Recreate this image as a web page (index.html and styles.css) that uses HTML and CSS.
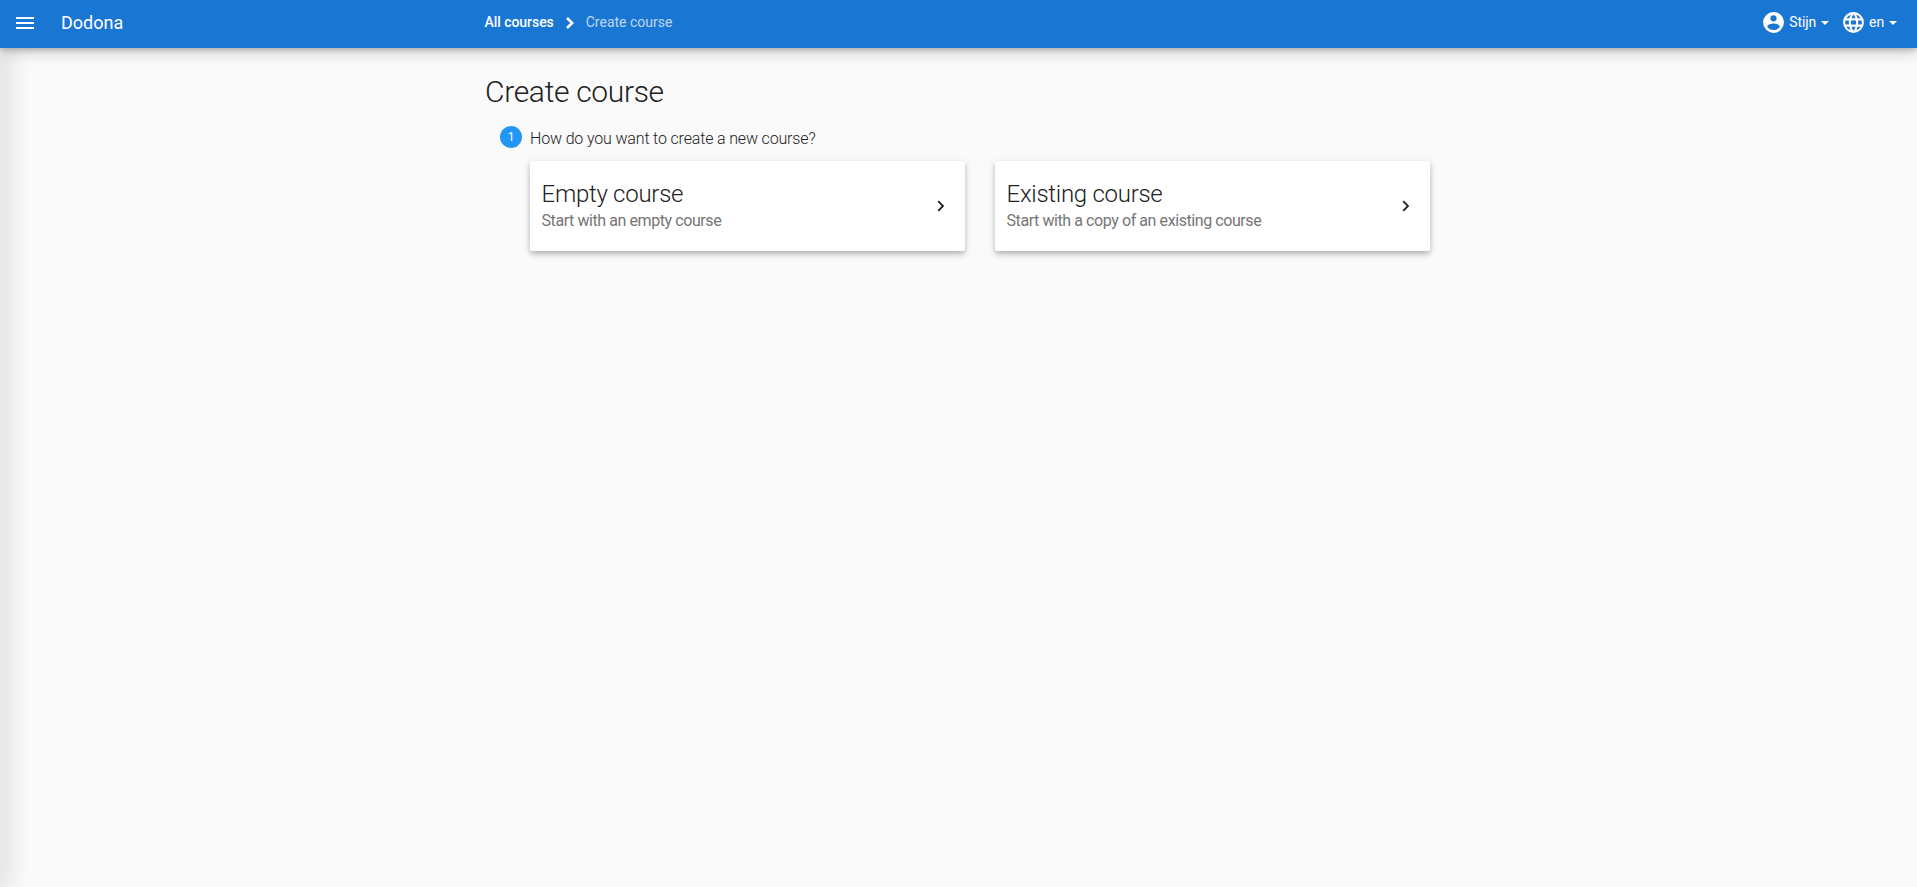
FILE: index.html
```html
<!DOCTYPE html>
<html lang="en">
<head>
<meta charset="utf-8">
<title>Create course - Dodona</title>
<link rel="stylesheet" href="styles.css">
</head>
<body>
<header class="navbar">
  <svg class="menu" viewBox="0 0 24 24"><path d="M3 6h18v2H3V6m0 5h18v2H3v-2m0 5h18v2H3v-2z"/></svg>
  <a class="brand">Dodona</a>
  <nav class="crumbs">
    <a class="crumb">All courses</a>
    <svg class="crumb-sep" viewBox="0 0 8 12"><path d="M1 1 6.200 6 1 11"/></svg>
    <span class="current">Create course</span>
  </nav>
  <div class="actions">
    <a class="action"><svg class="icon" viewBox="0 0 24 24"><path d="M12 19.200c-2.500 0-4.710-1.280-6-3.200.030-2 4-3.100 6-3.100s5.970 1.100 6 3.100a7.232 7.232 0 0 1-6 3.200M12 5a3 3 0 0 1 3 3 3 3 0 0 1-3 3 3 3 0 0 1-3-3 3 3 0 0 1 3-3m0-3A10 10 0 0 0 2 12a10 10 0 0 0 10 10 10 10 0 0 0 10-10c0-5.530-4.500-10-10-10z"/></svg><span>Stijn</span><i class="caret"></i></a>
    <a class="action"><svg class="icon" viewBox="0 0 24 24"><path d="M16.360 14c.080-.660.140-1.320.140-2 0-.680-.060-1.340-.140-2h3.380c.160.640.260 1.310.260 2s-.100 1.360-.260 2m-5.150 5.560c.600-1.110 1.060-2.310 1.380-3.560h2.950a8.030 8.030 0 0 1-4.330 3.560M14.340 14H9.660c-.100-.660-.160-1.320-.160-2 0-.680.060-1.350.160-2h4.680c.090.650.160 1.320.160 2 0 .680-.070 1.340-.160 2M12 19.960c-.830-1.200-1.500-2.530-1.910-3.960h3.820c-.410 1.430-1.080 2.760-1.910 3.960M8 8H5.080A7.923 7.923 0 0 1 9.400 4.440C8.800 5.550 8.350 6.750 8 8m-2.920 8H8c.350 1.250.800 2.450 1.400 3.560A8.008 8.008 0 0 1 5.080 16m-.820-2C4.100 13.360 4 12.690 4 12s.100-1.360.260-2h3.380c-.080.660-.140 1.320-.140 2 0 .680.060 1.340.140 2M12 4.030c.830 1.200 1.500 2.540 1.910 3.970h-3.820c.410-1.430 1.080-2.770 1.910-3.970M18.920 8h-2.950a15.650 15.650 0 0 0-1.380-3.560c1.840.630 3.370 1.900 4.330 3.560M12 2C6.470 2 2 6.500 2 12a10 10 0 0 0 10 10 10 10 0 0 0 10-10A10 10 0 0 0 12 2z"/></svg><span>en</span><i class="caret"></i></a>
  </div>
</header>
<div class="page">
  <aside class="drawer-edge"></aside>
  <main class="content">
    <h1 class="title">Create course</h1>
    <section class="step">
      <div class="step-head"><span class="number">1</span><span class="question">How do you want to create a new course?</span></div>
      <div class="cards">
        <a class="card">
          <div><h2 class="card-title">Empty course</h2><p class="card-text">Start with an empty course</p></div>
          <svg class="chevron" viewBox="0 0 8 12"><path d="M1.200 1.200 6 6l-4.800 4.800"/></svg>
        </a>
        <a class="card">
          <div><h2 class="card-title">Existing course</h2><p class="card-text">Start with a copy of an existing course</p></div>
          <svg class="chevron" viewBox="0 0 8 12"><path d="M1.200 1.200 6 6l-4.800 4.800"/></svg>
        </a>
      </div>
    </section>
  </main>
</div>
</body>
</html>
```
FILE: styles.css
```css
* { box-sizing: border-box; }
body {
  margin: 0;
  height: 100vh;
  display: flex;
  flex-direction: column;
  overflow: hidden;
  background: #fafafa;
  color: #212121;
  font-family: Roboto, "Liberation Sans", sans-serif;
}
h1, h2, p { margin: 0; font-weight: 300; }
.navbar {
  flex: none;
  z-index: 2;
  height: 48px;
  display: flex;
  align-items: center;
  padding: 0 20px 0 13px;
  background: #1976d2;
  color: #fff;
  fill: #fff;
  box-shadow: 0 2px 5px rgba(0,0,0,.18), 0 3px 16px rgba(0,0,0,.22);
}
.menu { width: 24px; height: 24px; margin-top: -2px; }
.brand { width: 423px; margin-left: 24px; padding-bottom: 3px; font-size: 18px; line-height: 24px; }
.crumbs { display: flex; align-items: center; padding-bottom: 4px; font-size: 14px; line-height: 20px; }
.crumb { margin-left: .5px; font-weight: 500; letter-spacing: -.05px; }
.crumb-sep { width: 8px; height: 12px; margin: 2px 12px 0; fill: none; stroke: #fff; stroke-width: 2.600; }
.current { font-weight: 400; opacity: .7; }
.actions { display: flex; gap: 12px; margin-left: auto; padding-bottom: 3px; font-size: 14px; line-height: 20px; }
.action { display: flex; align-items: center; }
.action span { padding-bottom: 1px; letter-spacing: -.12px; }
.icon { width: 25px; height: 25px; margin: 0 3px 0 0; }
.caret { margin: 1px 0 0 5px; border: 4px solid transparent; border-top-color: #fff; border-bottom: 0; }
.page { display: flex; flex: 1; }
.drawer-edge { width: 0; box-shadow: 0 0 24px 5px rgba(0,0,0,.22); }
.content { width: 945px; margin-left: 485px; padding-top: 24px; }
.title { font-size: 30px; line-height: 40px; letter-spacing: -.32px; }
.step { padding: 13px 0 0 15px; }
.step-head { display: flex; align-items: center; height: 24px; }
.number {
  width: 22px;
  height: 22px;
  margin-right: 8px;
  border-radius: 50%;
  background: #2196f3;
  color: #fff;
  font-size: 12px;
  line-height: 22px;
  text-align: center;
}
.question { padding-top: 3px; font-size: 16px; font-weight: 300; letter-spacing: -.16px; }
.cards { display: grid; grid-template-columns: 1fr 1fr; gap: 30px; padding: 12px 0 0 30px; }
.card {
  height: 90px;
  display: flex;
  align-items: center;
  justify-content: space-between;
  padding: 0 20px 0 11.5px;
  border-radius: 2px;
  background: #fff;
  box-shadow: 0 3px 5px rgba(0,0,0,.22), 0 2px 10px rgba(0,0,0,.1);
}
.card-title { font-size: 24px; line-height: 30px; letter-spacing: -.27px; }
.card-text { color: #757575; font-size: 16px; font-weight: 400; line-height: 24px; letter-spacing: -.42px; }
.chevron { width: 8px; height: 12px; fill: none; stroke: #212121; stroke-width: 1.800; }
```
